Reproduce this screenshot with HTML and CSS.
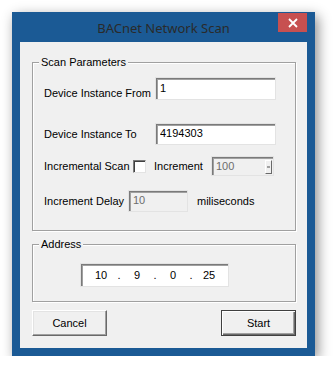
FILE: index.html
```html
<!DOCTYPE html>
<html lang="en">
<head>
    <meta charset="UTF-8">
    <title>BACnet Network Scan</title>
    <link rel="stylesheet" href="styles.css">
</head>
<body>
    <div class="window">
        <div class="titlebar">
            <span></span>
            <span class="title">BACnet Network Scan</span>
            <button class="close-btn" aria-label="Close">
                <svg width="10" height="10" viewBox="0 0 10 10"><path d="M1 1L9 9M9 1L1 9" stroke="#fff" stroke-width="1.8"/></svg>
            </button>
        </div>

        <div class="client">
            <!-- Scan parameters -->
            <div class="group group-scan">
                <span class="group-title">Scan Parameters</span>

                <div class="row row-from">
                    <label class="lbl lbl-wide lbl-low" for="from">Device Instance From</label>
                    <input class="edit edit-long" id="from" type="text" value="1">
                </div>

                <div class="row row-to">
                    <label class="lbl lbl-wide" for="to">Device Instance To</label>
                    <input class="edit edit-long" id="to" type="text" value="4194303">
                </div>

                <div class="row row-incr">
                    <span class="lbl lbl-incr">Incremental Scan</span>
                    <span class="check"></span>
                    <span class="lbl lbl-increment">Increment</span>
                    <div class="edit spin disabled">
                        <span>100</span>
                        <span class="spin-btn"></span>
                    </div>
                </div>

                <div class="row row-delay">
                    <span class="lbl lbl-delay">Increment Delay</span>
                    <input class="edit edit-short disabled" type="text" value="10" disabled>
                    <span class="lbl lbl-ms">miliseconds</span>
                </div>
            </div>

            <!-- Address -->
            <div class="group group-address">
                <span class="group-title">Address</span>
                <div class="edit ip">
                    <span class="octet">10</span><span class="dot">.</span>
                    <span class="octet">9</span><span class="dot">.</span>
                    <span class="octet">0</span><span class="dot">.</span>
                    <span class="octet">25</span>
                </div>
            </div>

            <div class="buttons">
                <button class="btn">Cancel</button>
                <button class="btn btn-default">Start</button>
            </div>
        </div>
    </div>
</body>
</html>
```

FILE: styles.css
```css
body {
    margin: 0;
    background: #fff;
    font-family: "Liberation Sans", Arial, sans-serif;
    font-size: 11px;
    color: #000;
    overflow: hidden;
}

.window {
    margin: 12px 0 0 12px;
    width: 303px;
    box-sizing: border-box;
    padding: 0 8px 8px;
    background: #1b5a95;
    box-shadow: 3px 4px 12px rgba(0, 0, 0, 0.45);
}

.titlebar {
    height: 30px;
    display: grid;
    grid-template-columns: 1fr auto 1fr;
}

.title {
    font-family: "Noto Sans", sans-serif;
    font-size: 13px;
    color: #2a2a2a;
    line-height: 30px;
    padding-top: 1px;
}

.close-btn {
    justify-self: end;
    align-self: start;
    margin-top: 1px;
    width: 29px;
    height: 19px;
    border: none;
    padding: 0;
    background: #c75050;
    display: flex;
    align-items: center;
    justify-content: center;
}

.client {
    height: 306px;
    box-sizing: border-box;
    background: #f0f0f0;
    padding: 20px 11px 0 12px;
}

/* etched group boxes */
.group {
    position: relative;
    width: 264px;
    box-sizing: border-box;
    border: 1px solid #a0a0a0;
    box-shadow: inset 1px 1px 0 #fff, 1px 1px 0 #fff;
}

.group-title {
    position: absolute;
    top: -8px;
    left: 6px;
    padding: 0 2px;
    background: #f0f0f0;
    line-height: 14px;
}

.group-scan {
    height: 169px;
    padding-left: 11px;
}

.group-address {
    height: 58px;
    margin-top: 13px;
}

.row {
    display: flex;
    align-items: center;
}

.row-from { margin-top: 14px; height: 23px; }
.row-to { margin-top: 23px; height: 22px; }
.row-incr { margin-top: 11px; height: 20px; }
.row-delay { margin-top: 14px; height: 22px; }

.lbl { white-space: nowrap; }
.lbl-wide { width: 111px; }
.lbl-low { padding-top: 8px; }
.lbl-incr { width: 91px; }
.lbl-increment { width: 57px; }
.lbl-delay { width: 84px; }
.lbl-ms { margin-left: 9px; }

/* sunken edit boxes */
.edit {
    box-sizing: border-box;
    font-family: "Liberation Sans", Arial, sans-serif;
    font-size: 11px;
    color: #000;
    background: #fff;
    border-style: solid;
    border-width: 2px 1px 1px 2px;
    border-color: #7a7a7a #fff #fff #7a7a7a;
    box-shadow: inset 1px 1px 0 #a0a0a0;
    outline: 1px solid #e3e3e3;
    outline-offset: -1px;
    padding: 0 0 0 3px;
    margin: 0;
}

.edit-long {
    width: 121px;
    height: 100%;
    padding-bottom: 3px;
}

.edit-short {
    width: 60px;
    height: 100%;
    padding-bottom: 4px;
}

.edit.disabled,
.edit:disabled {
    background: #f0f0f0;
    color: #6d6d6d;
}

.check {
    width: 13px;
    height: 13px;
    box-sizing: border-box;
    background: #fff;
    border-style: solid;
    border-width: 1px;
    border-color: #7a7a7a #e3e3e3 #e3e3e3 #7a7a7a;
    box-shadow: inset 1px 1px 0 #404040;
    margin: 0 8px 0 -2px;
}

.spin {
    width: 63px;
    height: 100%;
    display: flex;
    align-items: center;
    justify-content: space-between;
    padding-bottom: 2px;
}

.spin-btn {
    width: 7px;
    height: 14px;
    margin: 2px 1px 0 0;
    box-sizing: border-box;
    background: #f0f0f0;
    border-style: solid;
    border-width: 1px;
    border-color: #fff #696969 #696969 #fff;
    position: relative;
}

.spin-btn::after {
    content: "";
    position: absolute;
    left: 1px;
    top: 5px;
    width: 3px;
    height: 2px;
    background: #a0a0a0;
}

.ip {
    width: 149px;
    height: 24px;
    margin: 18px 0 0 47px;
    display: flex;
    align-items: center;
    padding: 0 0 2px 3px;
}

.octet {
    width: 32px;
    text-align: center;
}

.dot {
    width: 4px;
    text-align: center;
}

.buttons {
    margin-top: 8px;
    display: flex;
    justify-content: space-between;
    width: 264px;
}

.btn {
    width: 75px;
    height: 26px;
    font-family: "Liberation Sans", Arial, sans-serif;
    font-size: 11px;
    color: #000;
    background: #f0f0f0;
    border-style: solid;
    border-width: 1px;
    border-color: #fff #696969 #696969 #fff;
    box-shadow: inset -1px -1px 0 #a0a0a0, inset 1px 1px 0 #e3e3e3;
    padding: 0;
}

.btn-default {
    border: 1px solid #404040;
    box-shadow: inset 1px 1px 0 #fff, inset -1px -1px 0 #696969, inset -2px -2px 0 #a0a0a0;
}
```
